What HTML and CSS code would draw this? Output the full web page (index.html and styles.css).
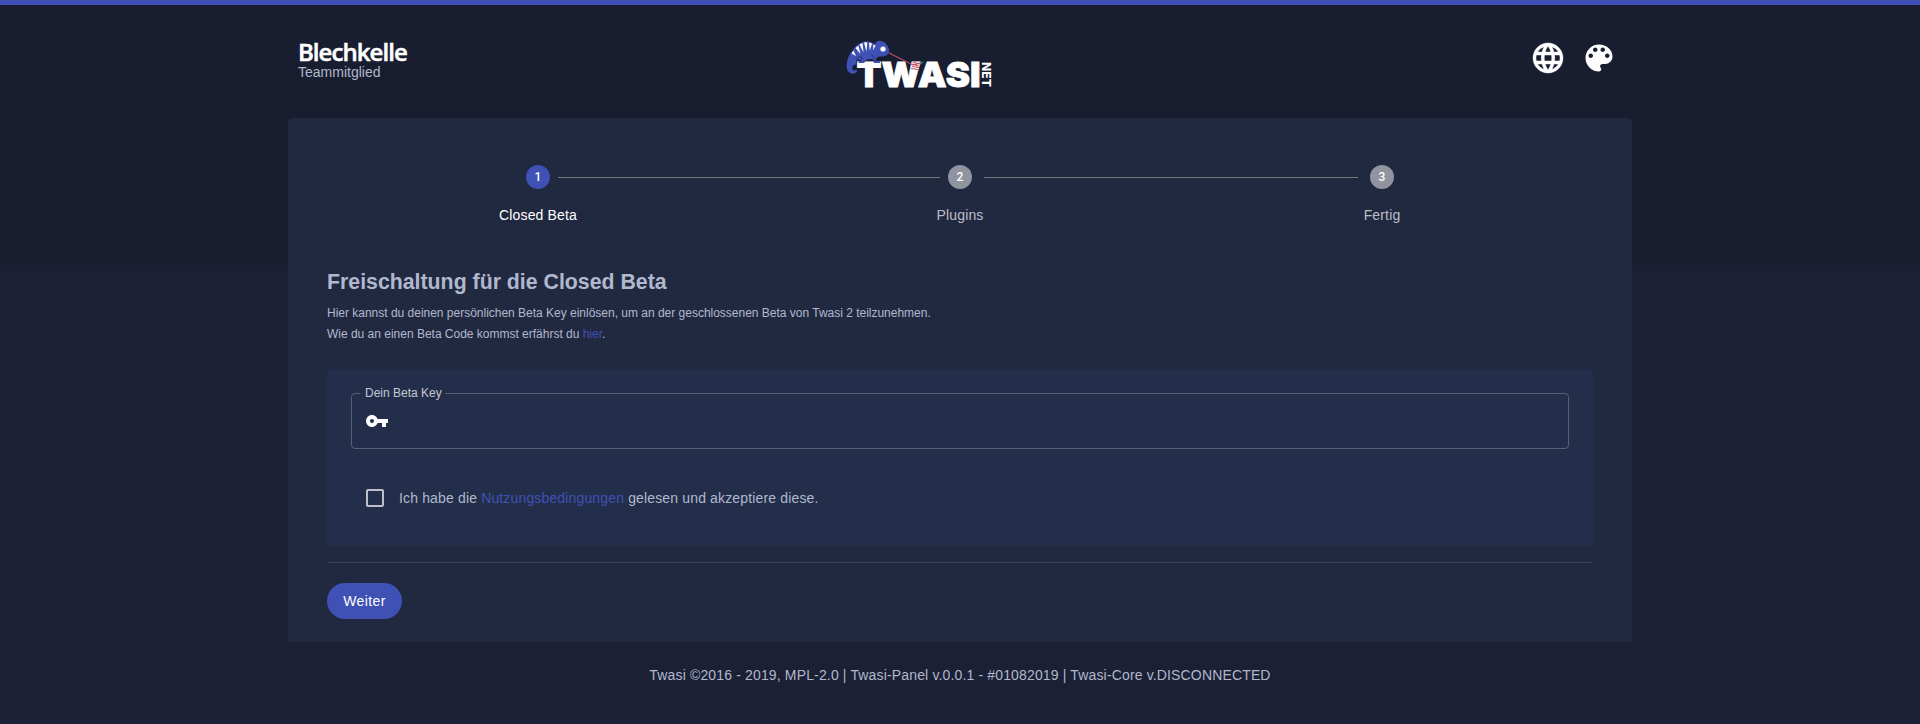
FILE: index.html
```html
<!DOCTYPE html>
<html lang="de">
<head>
<meta charset="utf-8">
<title>Twasi Panel</title>
<link rel="stylesheet" href="styles.css">
</head>
<body>
<div class="page">
  <header class="header">
    <div class="user">
      <div class="user-name">Blechkelle</div>
      <div class="user-role">Teammitglied</div>
    </div>
    <svg class="logo" viewBox="0 0 150 60" width="150" height="60">
      <g fill="#fff" class="logo-text">
        <text class="logo-word" x="11.500" y="52" font-size="34.5" textLength="124" lengthAdjust="spacingAndGlyphs">TWASI</text>
        <text class="logo-net" transform="translate(137 27) rotate(90)" x="0" y="0" font-size="12" textLength="25" lengthAdjust="spacingAndGlyphs">NET</text>
      </g>
      <path d="M11.500 29.500C8.500 29.500 6.500 32 7.500 34C8.500 36 10.500 35.500 11 34.500C13 35.500 12 38.500 8 38.700C3 38.500 1 34 1.700 29C2.500 22 6 17 10 12C14 7.500 20 5.500 25 7C27.500 7.500 29 8.800 30.500 9C30.500 5.500 35 5 38 6.500C42 8.500 44.500 13 44 17C43.500 20.500 39 21.800 34 21.500C32 22 30.500 23.500 31 25.500L35 26.500V28H29L27.500 24L22 24.500L19 28H13L15 26L14 24C11 25.500 10 27.500 11.500 29.500Z" fill="#3f51b5"/>
      <path d="M10.500 13L15.500 19L13.300 10.500ZM14.500 9.500L18.500 17.500L17.500 8ZM19 7.500L21.500 16.500L22.300 7.200ZM24 7.500L24.800 15.500L27 8.500ZM28.500 9.500L28 15.500L30.500 10.500ZM6.500 18.500L11 21L8.500 15.500Z" fill="#fff"/>
      <path d="M11 25C14 20 18 21 16.500 25L14 27.500M26.500 20C30 21 28 24 30 27" fill="none" stroke="#26337f" stroke-width="1"/>
      <circle cx="38" cy="14" r="2.600" fill="#fff"/>
      <path d="M44 18L68 30L76 28M67 29L73.500 31M67 31.500L74 32.500M66 33.500L73 34.500M68 27.500L77 29" fill="none" stroke="#c34d68" stroke-width="1.100"/>
      <path d="M75 28.500L78.500 27" stroke="#218d86" stroke-width="1.300"/>
    </svg>
    <div class="tools">
      <svg class="tool-icon globe" viewBox="0 0 24 24"><path d="M11.990 2C6.470 2 2 6.480 2 12s4.470 10 9.990 10C17.520 22 22 17.520 22 12S17.520 2 11.990 2zm6.930 6h-2.950c-.32-1.250-.78-2.450-1.380-3.560 1.840.63 3.370 1.910 4.330 3.560zM12 4.040c.83 1.200 1.480 2.530 1.910 3.960h-3.820c.43-1.430 1.080-2.760 1.910-3.960zM4.260 14C4.100 13.360 4 12.690 4 12s.1-1.360.26-2h3.380c-.08.66-.14 1.320-.14 2 0 .68.06 1.340.14 2H4.260zm.82 2h2.950c.32 1.250.78 2.450 1.380 3.560-1.840-.63-3.370-1.900-4.330-3.560zm2.950-8H5.080c.96-1.660 2.490-2.930 4.330-3.560C8.810 5.550 8.350 6.750 8.030 8zM12 19.960c-.83-1.200-1.480-2.530-1.910-3.960h3.820c-.43 1.430-1.080 2.760-1.910 3.960zM14.340 14H9.660c-.09-.66-.16-1.320-.16-2 0-.68.07-1.350.16-2h4.680c.09.65.16 1.320.16 2 0 .68-.07 1.340-.16 2zm.25 5.560c.6-1.110 1.060-2.310 1.380-3.560h2.950c-.96 1.650-2.490 2.930-4.330 3.560zM16.360 14c.08-.66.14-1.320.14-2 0-.68-.06-1.340-.14-2h3.380c.16.64.26 1.310.26 2s-.1 1.360-.26 2h-3.380z"/></svg>
      <svg class="tool-icon" viewBox="0 0 24 24"><path d="M12 3c-4.970 0-9 4.030-9 9s4.030 9 9 9c.83 0 1.500-.67 1.500-1.500 0-.39-.15-.74-.39-1.010-.23-.26-.38-.61-.38-.99 0-.83.67-1.500 1.500-1.500H16c2.760 0 5-2.240 5-5 0-4.420-4.030-8-9-8zm-5.500 9c-.83 0-1.500-.67-1.500-1.500S5.670 9 6.500 9 8 9.670 8 10.500 7.330 12 6.500 12zm3-4C8.670 8 8 7.330 8 6.500S8.670 5 9.500 5s1.500.67 1.500 1.500S10.330 8 9.500 8zm5 0c-.83 0-1.500-.67-1.500-1.500S13.670 5 14.500 5s1.500.67 1.500 1.500S15.330 8 14.500 8zm3 4c-.83 0-1.500-.67-1.500-1.500S16.670 9 17.500 9s1.500.67 1.500 1.500-.67 1.500-1.500 1.500z"/></svg>
    </div>
  </header>

  <main class="card">
    <ol class="stepper">
      <li class="step active"><span class="dot">1</span><span class="step-label">Closed Beta</span></li>
      <li class="line line-first"></li>
      <li class="step"><span class="dot">2</span><span class="step-label">Plugins</span></li>
      <li class="line"></li>
      <li class="step"><span class="dot">3</span><span class="step-label">Fertig</span></li>
    </ol>

    <h1 class="title">Freischaltung für die Closed Beta</h1>
    <p class="intro">Hier kannst du deinen persönlichen Beta Key einlösen, um an der geschlossenen Beta von Twasi 2 teilzunehmen.<br>Wie du an einen Beta Code kommst erfährst du <a class="link">hier</a>.</p>

    <section class="panel">
      <fieldset class="field">
        <legend class="field-label">Dein Beta Key</legend>
        <svg class="key" viewBox="0 0 24 24"><path d="M12.650 10C11.830 7.670 9.610 6 7 6c-3.310 0-6 2.690-6 6s2.690 6 6 6c2.610 0 4.830-1.670 5.650-4H17v4h4v-4h2v-4H12.650zM7 14c-1.100 0-2-.9-2-2s.9-2 2-2 2 .9 2 2-.9 2-2 2z"/></svg>
      </fieldset>
      <div class="consent">
        <svg class="checkbox" viewBox="0 0 24 24"><path d="M19 5v14H5V5h14m0-2H5c-1.100 0-2 .9-2 2v14c0 1.100.9 2 2 2h14c1.100 0 2-.9 2-2V5c0-1.100-.9-2-2-2z"/></svg>
        <span>Ich habe die <a class="link">Nutzungsbedingungen</a> gelesen und akzeptiere diese.</span>
      </div>
    </section>

    <div class="divider"></div>
    <button class="next">Weiter</button>
  </main>

  <footer class="footer">Twasi ©2016 - 2019, MPL-2.0 | Twasi-Panel v.0.0.1 - #01082019 | Twasi-Core v.DISCONNECTED</footer>
</div>
</body>
</html>
```
FILE: styles.css
```css
* { box-sizing: border-box; }

body {
  margin: 0;
  height: 724px;
  overflow: hidden;
  background: linear-gradient(#181d2f 265px, #1b2035 265px);
  color: #b1b8ce;
  font-family: "Liberation Sans", Arial, sans-serif;
  font-size: 14px;
}

.page {
  border-top: 5px solid #3f51b5;
  display: flex;
  flex-direction: column;
  align-items: center;
}

.header {
  width: 1344px;
  height: 113px;
  padding: 0 15px 0 10px;
  display: grid;
  grid-template-columns: 547px 150px 1fr;
  align-items: start;
}

.user { padding-top: 34px; }

.user-name {
  color: #fff;
  font: 600 24px/26px "Open Sans", "Noto Sans", sans-serif;
  letter-spacing: -.95px;
  -webkit-text-stroke: .5px #fff;
}

.user-role { line-height: 16px; margin-top: -1px; }

.logo { margin-top: 30px; overflow: visible; }
.logo-text { font-family: Inter, sans-serif; font-weight: 900; }
.logo-word { stroke: #fff; stroke-width: .8; }
.logo-net { font-weight: 800; }

.tools {
  display: flex;
  justify-content: flex-end;
  gap: 15px;
  padding-top: 35px;
}

.tool-icon { width: 36px; height: 36px; fill: #fff; }
.globe { stroke: #fff; stroke-width: .3; }

.card {
  width: 1344px;
  height: 524px;
  padding: 47px 39px 0;
  border-radius: 4px;
  background: #212940;
}

.stepper {
  list-style: none;
  margin: 0;
  padding: 0 161px;
  height: 104px;
  display: flex;
}

.step {
  width: 100px;
  display: flex;
  flex-direction: column;
  align-items: center;
  gap: 16px;
  color: #bcbec6;
  line-height: 20px;
  letter-spacing: .01071em;
}

.active { color: #fff; }

.dot {
  width: 24px;
  height: 24px;
  border-radius: 50%;
  background: #9093a0;
  color: #fff;
  font: 500 12px/24px Roboto, sans-serif;
  letter-spacing: 0;
  text-align: center;
}

.active .dot { background: #3f51b5; }

.line {
  flex: none;
  width: 374px;
  height: 1px;
  margin: 12px -26px 0;
  background: #73767c;
}

.line-first { width: 382px; margin: 12px -30px 0; }

.title {
  margin: 0;
  font-size: 21.3px;
  line-height: 26px;
}

.intro {
  margin: 8px 0 0;
  font-size: 12px;
  line-height: 21px;
  letter-spacing: -.01px;
}

.link { color: #3f51b5; }

.panel {
  height: 177px;
  margin-top: 24px;
  padding: 18px 24px 0;
  border-radius: 4px;
  background: #232e4a;
}

.field {
  height: 62px;
  margin: 0;
  padding: 0 13px;
  border: 1px solid #576077;
  border-radius: 4px;
}

.field-label {
  margin-left: -5px;
  padding: 0 3px 0 5px;
  color: #c5c9d2;
  font-size: 12px;
  line-height: 13px;
}

.key { display: block; width: 24px; height: 24px; margin-top: 9px; fill: #fff; }

.consent {
  display: flex;
  align-items: center;
  gap: 12px;
  height: 24px;
  margin: 37px 0 0 12px;
  letter-spacing: .01071em;
}

.checkbox { width: 24px; height: 24px; fill: #bdc0c9; }

.divider { height: 1px; margin: 16px 0 20px; background: #3b4156; }

.next {
  display: block;
  width: 75px;
  height: 36px;
  padding: 0;
  border: 0;
  border-radius: 18px;
  background: #3f51b5;
  color: #fff;
  font: 14px "Liberation Sans", Arial, sans-serif;
  letter-spacing: .02857em;
}

.footer { margin-top: 25px; line-height: 16px; letter-spacing: .01071em; }
```
